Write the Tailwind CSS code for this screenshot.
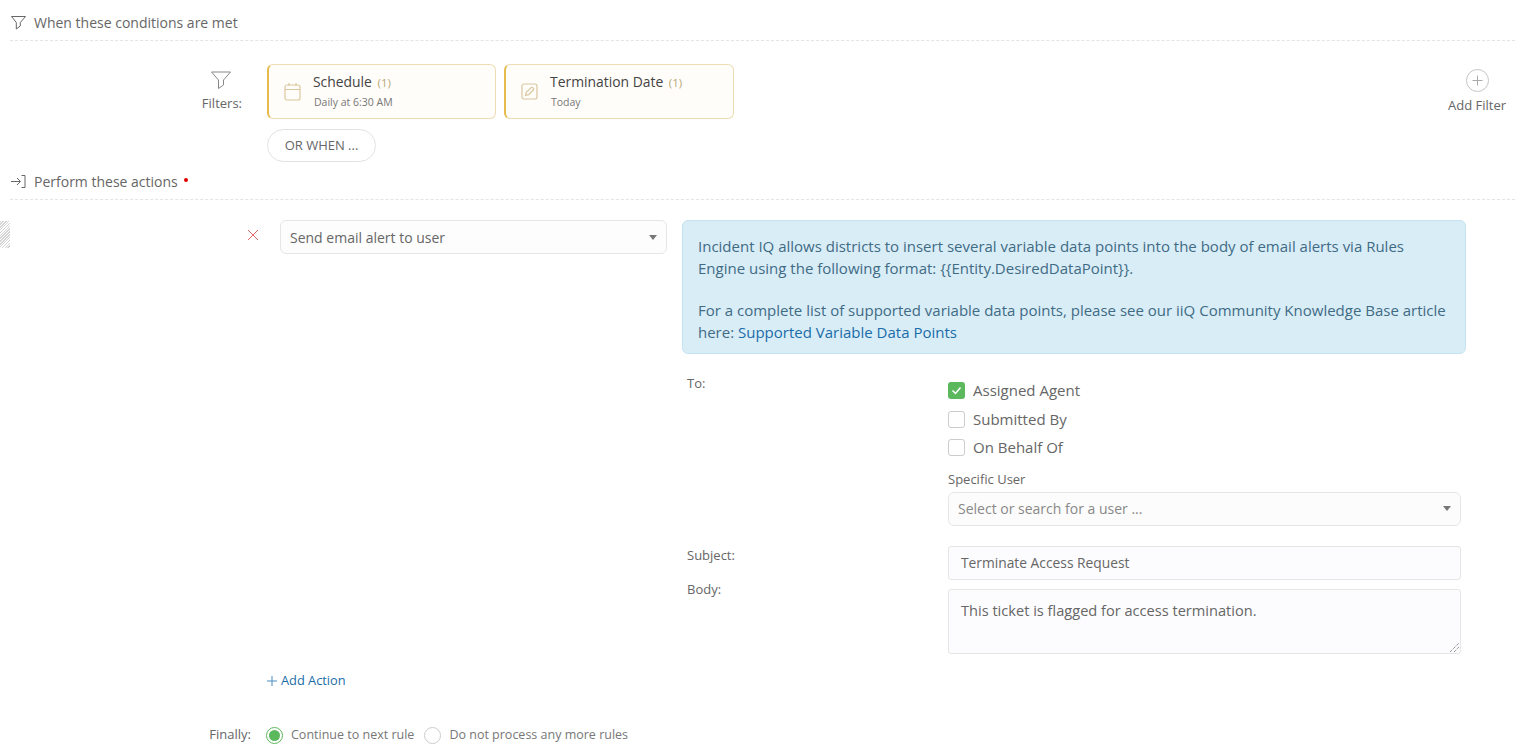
<!DOCTYPE html>
<html lang="en">
<head>
    <meta charset="UTF-8">
    <title>Rule Editor</title>
    <script src="https://cdn.jsdelivr.net/npm/@tailwindcss/browser@4"></script>
</head>
<body class="bg-white h-[745px] overflow-hidden font-['Open_Sans',sans-serif] text-[#666]">
    <!-- conditions header -->
    <div class="ml-[10px] h-[41px] border-b border-dashed border-[#e4e4e4] flex items-center pt-[5px] text-[14px]">
        <svg class="w-[15px] h-[15px] ml-[1px] mr-[8px]" viewBox="0 0 15 15" fill="none" stroke="#666" stroke-width="1"><path d="M0.5 1.500h14l-5.200 6v3.500l-4 3v-6.500z"/></svg>
        <span>When these conditions are met</span>
    </div>

    <!-- filters -->
    <div class="flex pt-[23px] h-[126px]">
        <div class="w-[242px] shrink-0 flex flex-col items-end pt-[6px]">
            <svg class="w-[20px] h-[20px] mr-[11px]" viewBox="0 0 20 20" fill="none" stroke="#888" stroke-width="1"><path d="M0.5 2h19l-7 8v5l-5 3.500v-8.500z"/></svg>
            <span class="text-[13px] mt-[4px]">Filters:</span>
        </div>
        <div class="ml-[25px]">
            <div class="flex gap-[8px]">
                <div class="w-[229px] h-[55px] flex items-center bg-[#fffdf9] border border-[#eedcb4] border-l-2 border-l-[#e6bb4e] rounded-[6px] pl-[15px]">
                    <svg class="w-[17px] h-[19px] shrink-0" viewBox="0 0 17 19" fill="none" stroke="#dcc8a0" stroke-width="1.200"><rect x="1" y="3" width="15" height="15" rx="2"/><path d="M1 7.500h15M5 1v3M12 1v3"/></svg>
                    <div class="ml-[12px] -mt-[1px]">
                        <div class="text-[13.900px] leading-[20px] text-[#444]">Schedule <span class="text-[11.500px] text-[#b8a878] ml-[2px]">(1)</span></div>
                        <div class="text-[10.500px] leading-[16px] text-[#777] mt-[1px] ml-[1px]">Daily at 6:30 AM</div>
                    </div>
                </div>
                <div class="w-[230px] h-[55px] flex items-center bg-[#fffdf9] border border-[#eedcb4] border-l-2 border-l-[#e6bb4e] rounded-[6px] pl-[15px]">
                    <svg class="w-[17px] h-[17px] shrink-0" viewBox="0 0 17 17" fill="none" stroke="#d8c6a0" stroke-width="1.200"><rect x="1" y="1" width="15" height="15" rx="2"/><path d="M4.500 12.500l0.800-3.200 4.700-4.700a1.200 1.200 0 0 1 1.700 0l0.700 0.700a1.200 1.200 0 0 1 0 1.700l-4.700 4.700z"/></svg>
                    <div class="ml-[12px] -mt-[1px]">
                        <div class="text-[13.900px] leading-[20px] text-[#444]">Termination Date <span class="text-[11.500px] text-[#b8a878] ml-[2px]">(1)</span></div>
                        <div class="text-[10.500px] leading-[16px] text-[#777] mt-[1px] ml-[1px]">Today</div>
                    </div>
                </div>
            </div>
            <div class="mt-[10px] w-[109px] h-[33px] rounded-full border border-[#e2e2e2] flex items-center justify-center text-[13px] text-[#666]">OR WHEN ...</div>
        </div>
        <div class="ml-auto mr-[9px] w-[58px] flex flex-col items-center pt-[5px]">
            <svg class="w-[23px] h-[23px]" viewBox="0 0 23 23" fill="none" stroke="#c4c4c4" stroke-width="1"><circle cx="11.500" cy="11.500" r="11"/><path d="M11.500 6.500v10M6.500 11.500h10" stroke="#aaa"/></svg>
            <span class="text-[13px] mt-[4px] whitespace-nowrap">Add Filter</span>
        </div>
    </div>

    <!-- actions header -->
    <div class="ml-[10px] h-[33px] border-b border-dashed border-[#e4e4e4] flex items-center pb-[4px] text-[14px]">
        <svg class="w-[15px] h-[13px] ml-[1px] mr-[8px]" viewBox="0 0 15 13" fill="none" stroke="#666" stroke-width="1"><path d="M0 6.500h9M6 3l3.500 3.500L6 10M10.500 0.500h3.500v12h-3.500"/></svg>
        <span>Perform these actions</span>
        <span class="w-[4px] h-[4px] rounded-full bg-[#e00000] ml-[6px] -mt-[3px]"></span>
    </div>

    <!-- action row -->
    <div class="flex pt-[20px]">
        <div class="w-[10px] h-[27px] mt-[1px] shrink-0 bg-[repeating-linear-gradient(135deg,#d4d4d4_0,#d4d4d4_1px,#fff_1px,#fff_2px)]"></div>
        <svg class="w-[12px] h-[12px] ml-[237px] mt-[9px] shrink-0" viewBox="0 0 12 12" fill="none" stroke="#e0686c" stroke-width="1"><path d="M1 1l10 10M11 1L1 11"/></svg>
        <div class="w-[387px] h-[34px] ml-[21px] shrink-0 bg-[#fdfdfd] border border-[#e6e6e6] rounded-[6px] flex items-center justify-between px-[9px] text-[14px]">
            <span>Send email alert to user</span>
            <span class="w-0 h-0 border-x-[4px] border-x-transparent border-t-[5px] border-t-[#777]"></span>
        </div>
        <div class="w-[784px] ml-[15px] shrink-0">
            <div class="h-[134px] bg-[#d9edf7] border border-[#c4e3f2] rounded-[6px] px-[15px] pt-[14px] text-[15px] leading-[22px] text-[#3f6b85]">
                <p>Incident IQ allows districts to insert several variable data points into the body of email alerts via Rules Engine using the following format: {{Entity.DesiredDataPoint}}.</p>
                <p class="mt-[20px]">For a complete list of supported variable data points, please see our iiQ Community Knowledge Base article here: <a class="text-[#1a6ca8]">Supported Variable Data Points</a></p>
            </div>

            <div class="flex mt-[21px]">
                <div class="w-[266px] shrink-0 pl-[5px] text-[13px] leading-[16px]">To:</div>
                <div class="w-[513px]">
                    <div class="flex flex-col text-[15px]">
                        <label class="flex items-center h-[20px] mt-[5px]">
                            <span class="w-[17px] h-[17px] rounded-[3px] bg-[#5cb85c] flex items-center justify-center">
                                <svg class="w-[11px] h-[11px]" viewBox="0 0 11 11" fill="none" stroke="#fff" stroke-width="1.500"><path d="M1.500 5.500l3 3 5-6"/></svg>
                            </span>
                            <span class="ml-[8px]">Assigned Agent</span>
                        </label>
                        <label class="flex items-center h-[20px] mt-[9px]">
                            <span class="w-[17px] h-[17px] rounded-[3px] border border-[#ccc] bg-white"></span>
                            <span class="ml-[8px]">Submitted By</span>
                        </label>
                        <label class="flex items-center h-[20px] mt-[8px]">
                            <span class="w-[17px] h-[17px] rounded-[3px] border border-[#ccc] bg-white"></span>
                            <span class="ml-[8px]">On Behalf Of</span>
                        </label>
                    </div>
                    <div class="text-[13px] leading-[16px] mt-[14px]">Specific User</div>
                    <div class="h-[34px] mt-[5px] pb-[1px] bg-[#fcfcfc] border border-[#e6e6e6] rounded-[6px] flex items-center justify-between px-[9px] text-[14px] text-[#888]">
                        <span>Select or search for a user ...</span>
                        <span class="w-0 h-0 border-x-[4px] border-x-transparent border-t-[5px] border-t-[#777]"></span>
                    </div>
                </div>
            </div>

            <div class="flex mt-[20px]">
                <div class="w-[266px] shrink-0 pl-[5px] text-[13px] leading-[16px] pt-[1px]">Subject:</div>
                <div class="w-[513px] h-[34px] pt-[1px] bg-[#fcfcfe] border border-[#e6e6e6] rounded-[3px] flex items-center pl-[12px] text-[13.800px]">Terminate Access Request</div>
            </div>
            <div class="flex mt-[9px]">
                <div class="w-[266px] shrink-0 pl-[5px] text-[13px] leading-[16px] -mt-[8px]">Body:</div>
                <div class="relative w-[513px] h-[65px] bg-[#fcfcfe] border border-[#e6e6e6] rounded-[3px] pl-[12px] pt-[10px] text-[14.600px] leading-[20px]">
                    This ticket is flagged for access termination.
                    <svg class="absolute right-[1px] bottom-[1px] w-[9px] h-[9px]" viewBox="0 0 9 9" stroke="#666" stroke-width="1" stroke-dasharray="1 1"><path d="M0 9L9 0M4 9l5-5"/></svg>
                </div>
            </div>
        </div>
    </div>

    <!-- footer -->
    <div class="pl-[267px] mt-[17px] flex items-center h-[20px] text-[12.800px] text-[#1a6ca8]">
        <svg class="w-[10px] h-[10px] mr-[4px]" viewBox="0 0 10 10" fill="none" stroke="#4a8cc0" stroke-width="1"><path d="M5 0v10M0 5h10"/></svg>
        <span>Add Action</span>
    </div>
    <div class="flex items-center mt-[34px] h-[20px] text-[12.500px]">
        <span class="w-[251px] text-right text-[13px]">Finally:</span>
        <span class="ml-[15px] w-[17px] h-[17px] rounded-full border border-[#5cb85c] flex items-center justify-center">
            <span class="w-[11px] h-[11px] rounded-full bg-[#5cb85c]"></span>
        </span>
        <span class="ml-[8px] text-[#777]">Continue to next rule</span>
        <span class="ml-[10px] w-[17px] h-[17px] rounded-full border border-[#ccc] bg-white"></span>
        <span class="ml-[8px] text-[#777]">Do not process any more rules</span>
    </div>
</body>
</html>
